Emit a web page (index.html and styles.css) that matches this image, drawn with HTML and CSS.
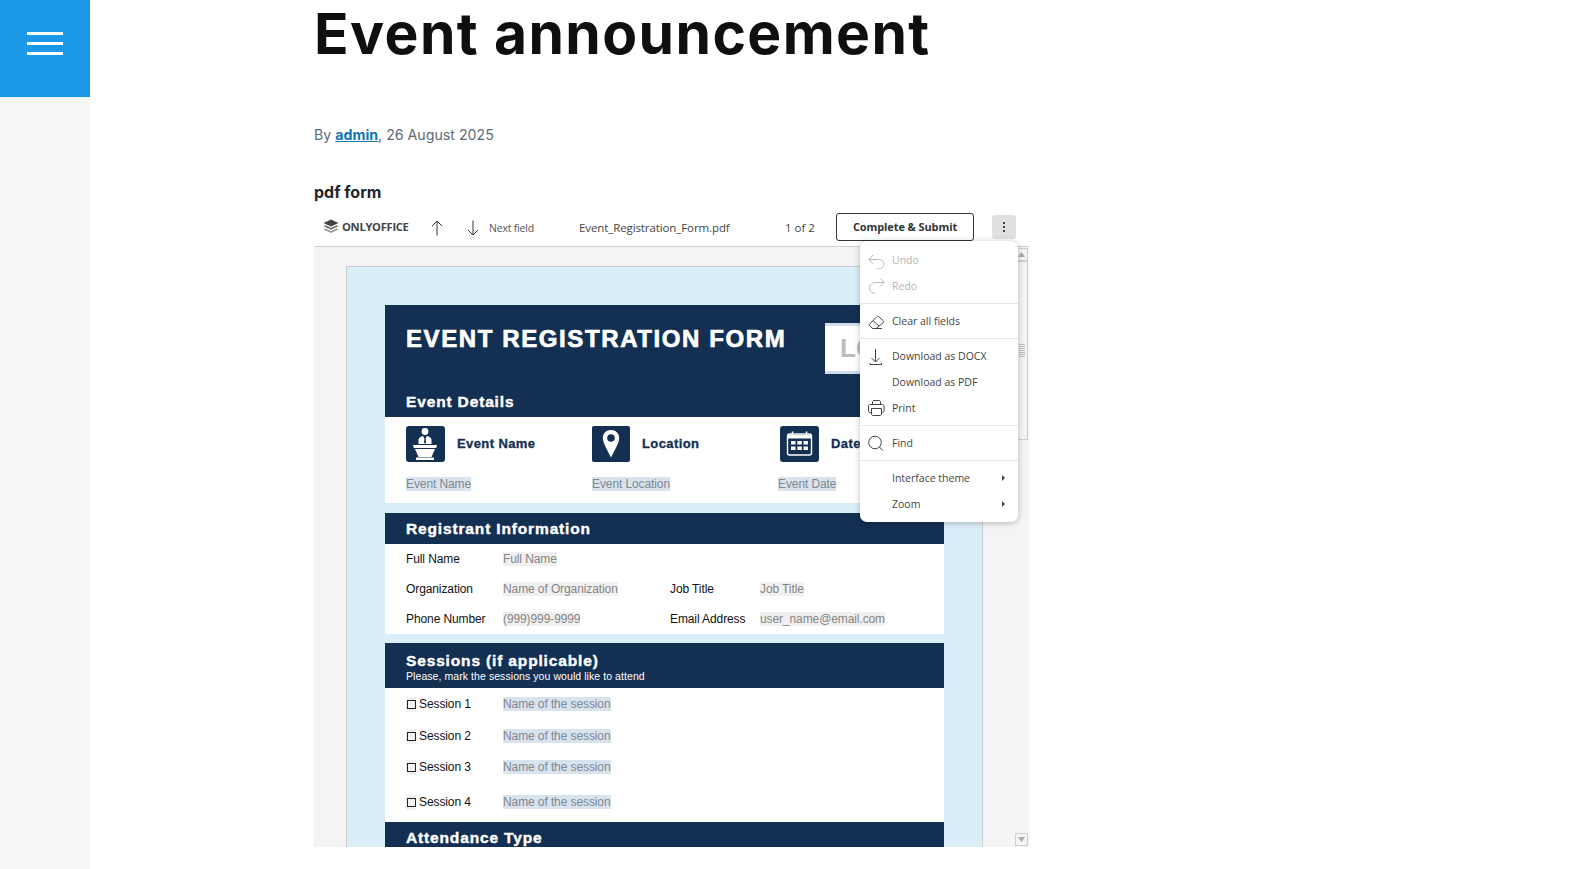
FILE: index.html
```html
<!DOCTYPE html>
<html lang="en">
<head>
<meta charset="utf-8">
<title>Event announcement</title>
<link rel="stylesheet" href="styles.css">
</head>
<body>
<div class="layout">
  <aside class="sidebar">
    <div class="menu-button"><i></i><i></i><i></i></div>
  </aside>
  <main class="content">
    <h1 class="title">Event announcement</h1>
    <p class="byline">By <a href="#">admin</a>, 26 August 2025</p>
    <h2 class="field-label">pdf form</h2>
    <section class="viewer">
      <header class="toolbar">
        <div class="brand">
          <svg width="16" height="15" viewBox="0 0 16 15"><path d="M8 0.500 15.500 4 8 7.500 0.500 4z" fill="#444"/><path d="M2.500 6.200 0.500 7.200 8 10.800 15.500 7.200 13.500 6.200 8 8.800z" fill="#777"/><path d="M2.500 9.400 0.500 10.400 8 14 15.500 10.400 13.500 9.400 8 12z" fill="#999"/></svg>
          <span>ONLYOFFICE</span>
        </div>
        <svg class="arrow-up" width="12" height="16" viewBox="0 0 12 16"><path d="M6 15.500V1M1 6l5-5 5 5" fill="none" stroke="#333"/></svg>
        <svg class="arrow-down" width="12" height="16" viewBox="0 0 12 16"><path d="M6 .5V15M1 10l5 5 5-5" fill="none" stroke="#333"/></svg>
        <span class="next-field">Next field</span>
        <span class="file-name">Event_Registration_Form.pdf</span>
        <span class="page-count">1 of 2</span>
        <button class="submit">Complete &amp; Submit</button>
        <div class="more"><i></i><i></i><i></i></div>
      </header>
      <div class="stage">
        <div class="page">
          <div class="hero">
            <div class="hero-top">
              <div class="hero-title">EVENT REGISTRATION FORM</div>
              <div class="logo-box">LOGO</div>
            </div>
            <div class="band-title">Event Details</div>
          </div>
          <div class="details">
            <div class="detail">
              <div class="detail-head">
                <svg class="detail-icon" width="39" height="36" viewBox="0 0 39 36"><rect width="39" height="36" rx="3" fill="#132f52"/><circle cx="19" cy="5.500" r="3.400" fill="#fff"/><path d="M12.500 18v-4c0-2 2-3.500 4.500-4l2 3.500 2-3.500c2.500.5 4.500 2 4.500 4v4z" fill="#fff"/><path d="M18.400 12.500h1.200l.4 4-1 1.200-1-1.200z" fill="#132f52"/><path d="M7 19h24l-.8 3H7.800z" fill="#fff"/><path d="M9 23h20l-3.500 8h-13z" fill="#fff"/><rect x="10" y="31.500" width="18" height="2.500" fill="#fff"/></svg>
                <span>Event Name</span>
              </div>
              <span class="fill blue-fill">Event Name</span>
            </div>
            <div class="detail">
              <div class="detail-head">
                <svg class="detail-icon pin" width="38" height="36" viewBox="0 0 38 36"><rect width="38" height="36" rx="2" fill="#132f52"/><path fill-rule="evenodd" d="M19 4c4.700 0 8.200 3.500 8.200 8 0 4.500-4.500 12-8.200 19.500C15.300 24 10.800 16.500 10.800 12c0-4.500 3.500-8 8.200-8zm0 4.200a3.800 3.800 0 1 0 0 7.600 3.800 3.800 0 0 0 0-7.600z" fill="#fff"/></svg>
                <span>Location</span>
              </div>
              <span class="fill blue-fill">Event Location</span>
            </div>
            <div class="detail detail-date">
              <div class="detail-head">
                <svg class="detail-icon" width="39" height="36" viewBox="0 0 39 36"><rect width="39" height="36" rx="3" fill="#132f52"/><rect x="7.500" y="8" width="24" height="21" rx="2" fill="none" stroke="#fff" stroke-width="1.400"/><path d="M7.500 9h24v3.500h-24z" fill="#fff"/><path d="M12.500 5.500v4M26.500 5.500v4" stroke="#fff" stroke-width="1.600"/><path d="M11 15h4.500v3.500H11zM17.300 15h4.500v3.500h-4.500zM23.500 15H28v3.500h-4.500zM11 20.500h4.500V24H11zM17.300 20.500h4.500V24h-4.500zM23.500 20.500H28V24h-4.500z" fill="#fff"/></svg>
                <span>Date</span>
              </div>
              <span class="fill blue-fill">Event Date</span>
            </div>
          </div>
          <div class="band band-single"><div class="band-title">Registrant Information</div></div>
          <div class="registrant">
            <div class="reg-row"><span class="reg-label">Full Name</span><span class="reg-value"><span class="fill grey-fill">Full Name</span></span></div>
            <div class="reg-row"><span class="reg-label">Organization</span><span class="reg-value"><span class="fill grey-fill">Name of Organization</span></span><span class="reg-label reg-label-b">Job Title</span><span class="fill grey-fill">Job Title</span></div>
            <div class="reg-row"><span class="reg-label">Phone Number</span><span class="reg-value"><span class="fill grey-fill">(999)999-9999</span></span><span class="reg-label reg-label-b">Email Address</span><span class="fill grey-fill">user_name@email.com</span></div>
          </div>
          <div class="band band-double">
            <div class="band-title">Sessions (if applicable)</div>
            <div class="band-note">Please, mark the sessions you would like to attend</div>
          </div>
          <div class="sessions">
            <div class="session"><span class="check"><i></i></span><span class="session-name">Session 1</span><span class="fill blue-fill">Name of the session</span></div>
            <div class="session"><span class="check"><i></i></span><span class="session-name">Session 2</span><span class="fill blue-fill">Name of the session</span></div>
            <div class="session session-short"><span class="check"><i></i></span><span class="session-name">Session 3</span><span class="fill blue-fill">Name of the session</span></div>
            <div class="session session-tall"><span class="check"><i></i></span><span class="session-name">Session 4</span><span class="fill blue-fill">Name of the session</span></div>
          </div>
          <div class="band band-single"><div class="band-title">Attendance Type</div></div>
        </div>
        <div class="scrollbar">
          <div class="scroll-btn"><svg width="7" height="5" viewBox="0 0 7 5"><path d="M3.500 0 7 5H0z" fill="#aaa"/></svg></div>
          <div class="scroll-thumb"><span class="grip"></span></div>
          <div class="scroll-space"></div>
          <div class="scroll-btn"><svg width="7" height="5" viewBox="0 0 7 5"><path d="M3.500 5 7 0H0z" fill="#aaa"/></svg></div>
        </div>
      </div>
      <nav class="menu">
        <div class="menu-group">
          <div class="menu-item disabled"><svg class="mi" width="17" height="17" viewBox="0 0 17 17"><path d="M5 3 1 7.500l4 4.500M1 7.500h9c3.500 0 6 2 6 4.750S13.500 17 10 17H8" fill="none" stroke="#bbb"/></svg>Undo</div>
          <div class="menu-item disabled"><svg class="mi" width="17" height="17" viewBox="0 0 17 17"><path d="M12 .5l4 4-4 4M16 4.500H8c-4 0-6.500 2.500-6.500 5.500S4 15.500 7 15.500" fill="none" stroke="#bbb"/></svg>Redo</div>
        </div>
        <div class="menu-group">
          <div class="menu-item"><svg class="mi" width="17" height="17" viewBox="0 0 17 17"><path d="M1 11.800 9 3.500c.5-.5 1-.5 1.500 0L15.500 8c.5.5.5 1 0 1.500L8 15.500H4.500zM5 7.500l6 5.500M8 15.500h6" fill="none" stroke="#444"/></svg>Clear all fields</div>
        </div>
        <div class="menu-group">
          <div class="menu-item"><svg class="mi" width="17" height="17" viewBox="0 0 17 17"><path d="M7.500 1v13M3.500 10l4 4 4-4M2 15v1.500h11.500V15" fill="none" stroke="#444"/></svg>Download as DOCX</div>
          <div class="menu-item"><span class="mi"></span>Download as PDF</div>
          <div class="menu-item"><svg class="mi" width="17" height="17" viewBox="0 0 17 17"><path d="M4.500 4.500V2c0-.8.700-1.500 1.500-1.500h5c.8 0 1.500.7 1.500 1.500v2.500M3.500 12.500H2c-.8 0-1.500-.7-1.500-1.500V6c0-.8.700-1.500 1.500-1.500h12.500c.8 0 1.500.7 1.500 1.500v5c0 .8-.7 1.500-1.500 1.500H13M3.500 8.500h10V14c0 .8-.7 1.500-1.500 1.500H5c-.8 0-1.500-.7-1.500-1.500z" fill="none" stroke="#444"/></svg>Print</div>
        </div>
        <div class="menu-group">
          <div class="menu-item"><svg class="mi" width="17" height="17" viewBox="0 0 17 17"><circle cx="7" cy="7.500" r="6.300" fill="none" stroke="#444"/><path d="M11.500 12l3.200 3.500" stroke="#444"/></svg>Find</div>
        </div>
        <div class="menu-group">
          <div class="menu-item"><span class="mi"></span>Interface theme<b class="caret"></b></div>
          <div class="menu-item"><span class="mi"></span>Zoom<b class="caret"></b></div>
        </div>
      </nav>
    </section>
  </main>
</div>
</body>
</html>
```

FILE: styles.css
```css
* { box-sizing: border-box; }
html, body { margin: 0; padding: 0; height: 100%; overflow: hidden; background: #fff; }
body { font-family: "Inter", "Liberation Sans", sans-serif; }
.layout { display: flex; height: 869px; }
.sidebar { width: 90px; flex: none; background: #f5f7f7; }
.menu-button { height: 97px; background: #1b99e6; display: flex; flex-direction: column; align-items: center; gap: 7px; padding-top: 32px; }
.menu-button i { display: block; width: 36px; height: 3px; background: #fff; }
.content { padding-left: 224px; width: 939px; flex: none; }
.title { margin: 0; font-size: 57px; line-height: 68px; font-weight: 700; color: #0e0f11; letter-spacing: 1.4px; white-space: nowrap; }
.byline { margin: 58px 0 0; font-size: 14.200px; line-height: 18px; color: #5c6b78; }
.byline a { color: #0f76b2; font-weight: 700; }
.field-label { margin: 38px 0 0; font-size: 16px; line-height: 20px; font-weight: 700; color: #22262a; }
.viewer { position: relative; margin-top: 8px; width: 715px; }

.toolbar { height: 37px; border-bottom: 1px solid #cfcfcf; display: flex; align-items: center; font-family: "Open Sans", "Liberation Sans", sans-serif; font-size: 11px; color: #444; padding: 0 0 1px 9px; }
.brand { display: flex; align-items: center; gap: 3px; width: 108px; margin-top: -2px; font-weight: 700; font-size: 11.200px; letter-spacing: -.3px; color: #444; }
.arrow-up { flex: none; margin-right: 24px; }
.arrow-down { flex: none; margin-right: 10px; }
.next-field { width: 90px; font-size: 10.500px; color: #555; letter-spacing: -.2px; }
.file-name { width: 206px; font-size: 11.500px; letter-spacing: -.1px; color: #444; }
.page-count { width: 51px; font-size: 11.500px; color: #444; }
.submit { width: 138px; height: 28px; margin-top: -2px; background: #fff; border: 1px solid #333; border-radius: 3px; font: 700 11px "Open Sans", "Liberation Sans", sans-serif; color: #333; padding: 0; letter-spacing: -.1px; }
.more { width: 24px; height: 24px; margin-left: 18px; margin-top: -2px; background: #e0e0e0; border-radius: 3px; display: flex; flex-direction: column; align-items: center; justify-content: center; gap: 2px; }
.more i { width: 2px; height: 2px; background: #444; }

.stage { position: relative; height: 600px; background: #f4f4f4; overflow: hidden; padding: 19px 0 0 32px; }
.page { width: 637px; height: 700px; background: #daeef7; border: 1px solid #c6ced4; padding: 38px 0 0 38px; }
.hero { width: 559px; height: 112px; background: #132f52; padding: 0 21px; overflow: hidden; }
.hero-top { display: flex; height: 87px; padding-top: 18px; }
.hero-title { width: 419px; flex: none; margin-top: 1px; font: 700 24px/30px "Liberation Sans", sans-serif; color: #fff; -webkit-text-stroke: .7px #fff; letter-spacing: 1.6px; white-space: nowrap; }
.logo-box { width: 110px; height: 51px; flex: none; background: #fff; border-top: 3px solid #cfdeeb; border-bottom: 3px solid #cfdeeb; padding-left: 15px; font: 700 26px/45px "Liberation Sans", sans-serif; color: #bcbcbc; white-space: nowrap; }
.band-title { font: 700 15.500px/20px "Liberation Sans", sans-serif; color: #fff; -webkit-text-stroke: .4px #fff; letter-spacing: .85px; white-space: nowrap; }
.details { width: 559px; height: 86px; background: #fff; padding: 8px 0 0 21px; display: grid; grid-template-columns: 186px 188px 1fr; }
.detail { display: flex; flex-direction: column; align-items: flex-start; }
.detail-date .fill { margin-left: -2px; }
.detail-head { display: flex; align-items: center; gap: 12px; height: 37px; margin-bottom: 15px; font: 700 13px "Liberation Sans", sans-serif; color: #132f52; -webkit-text-stroke: .3px #132f52; letter-spacing: .4px; }
.detail-icon { flex: none; }
.fill { display: inline-block; font: 12px/14px "Liberation Sans", sans-serif; white-space: nowrap; letter-spacing: -.1px; }
.blue-fill { background: #d9e3ee; color: #7f8892; }
.grey-fill { background: #f0f0f0; color: #858585; }
.band { width: 559px; background: #132f52; padding: 0 21px; }
.band-single { height: 31px; margin-top: 10px; padding-top: 6px; }
.band-double { height: 45px; margin-top: 9px; padding-top: 9px; }
.band-double .band-title { line-height: 18px; }
.band-note { font: 10.500px/12px "Liberation Sans", sans-serif; color: #fff; letter-spacing: .07px; white-space: nowrap; }
.registrant { width: 559px; height: 90px; background: #fff; padding-left: 21px; }
.reg-row { height: 30px; display: flex; align-items: center; font: 12px "Liberation Sans", sans-serif; color: #111; }
.reg-label { width: 97px; flex: none; white-space: nowrap; letter-spacing: -.1px; }
.reg-label-b { width: 90px; }
.reg-value { width: 167px; flex: none; }
.sessions { width: 559px; height: 134px; background: #fff; padding: 0 0 0 21px; }
.session { height: 32px; display: flex; align-items: center; font: 12px "Liberation Sans", sans-serif; color: #111; }
.session-short { height: 30px; }
.session-tall { height: 40px; }
.check { width: 10px; height: 15px; background: #f0f0f0; display: flex; align-items: center; justify-content: center; flex: none; }
.check i { display: block; width: 9px; height: 9px; border: 1px solid #222; }
.session-name { width: 87px; padding-left: 3px; flex: none; letter-spacing: -.1px; }
.sessions + .band-single { margin-top: 0; height: 40px; padding-top: 6px; }

.scrollbar { position: absolute; top: 1px; right: 1px; bottom: 1px; width: 13px; display: flex; flex-direction: column; }
.scroll-btn { height: 13px; background: #f4f4f4; border: 1px solid #cfcfcf; display: flex; align-items: center; justify-content: center; flex: none; }
.scroll-thumb { height: 179px; background: #f4f4f4; border: 1px solid #cfcfcf; display: flex; align-items: center; justify-content: center; flex: none; }
.grip { display: block; width: 6px; height: 13px; background: repeating-linear-gradient(#bdbdbd 0 1px, transparent 1px 2px); }
.scroll-space { flex: 1; }

.menu { position: absolute; left: 546px; top: 31px; width: 158px; height: 281px; background: #fff; border-radius: 7px; box-shadow: 0 1px 6px rgba(0, 0, 0, .25); padding-top: 6px; font-family: "Open Sans", "Liberation Sans", sans-serif; font-size: 10.500px; color: #444; z-index: 2; }
.menu-group { padding: 0 0 4px; margin-bottom: 4px; border-bottom: 1px solid #e6e6e6; }
.menu-group:last-child { border-bottom: 0; margin-bottom: 0; padding-bottom: 0; }
.menu-item { height: 26px; display: flex; align-items: center; position: relative; }
.mi { width: 17px; height: 17px; margin: 0 7px 0 8px; flex: none; }
.disabled { color: #b4b4b4; }
.caret { position: absolute; left: 142px; top: 10px; width: 0; height: 0; border-left: 3px solid #444; border-top: 3px solid transparent; border-bottom: 3px solid transparent; }
```
